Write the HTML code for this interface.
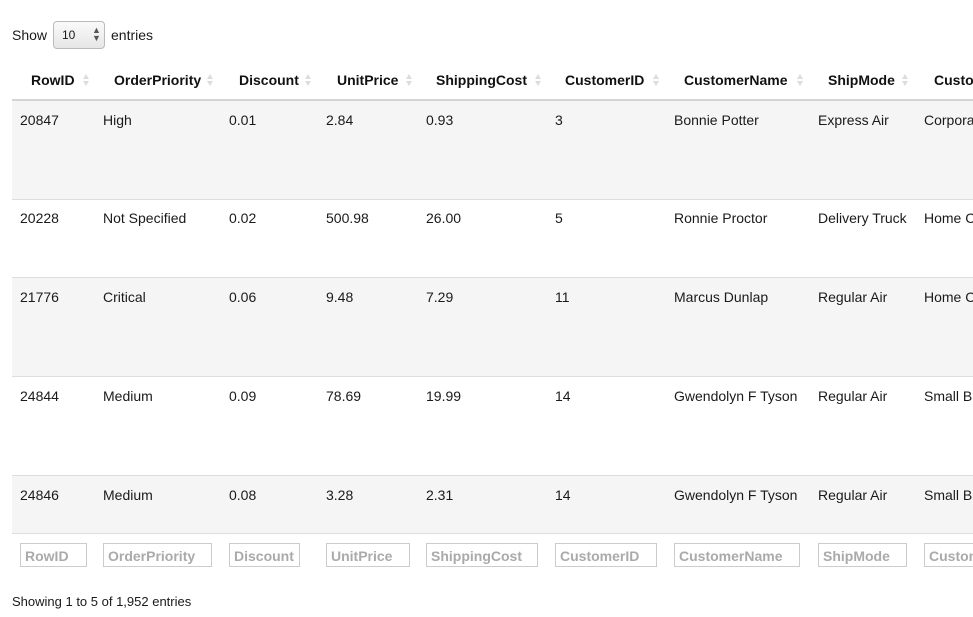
<!DOCTYPE html>
<html><head><style>
html,body{margin:0;width:973px;height:617px;overflow:hidden}
body{background:#fff;font-family:"Liberation Sans",Arial,sans-serif;font-size:14px;color:#1a1a1a}
#w{position:relative;width:973px;height:617px;overflow:hidden}
.a{position:absolute;white-space:nowrap;line-height:16px}
.h{font-weight:bold;color:#111}
.s{position:absolute;width:7px;height:14px}
.s:before,.s:after{content:"";position:absolute;left:0;border-left:3.5px solid transparent;border-right:3.5px solid transparent}
.s:before{top:1px;border-bottom:5px solid #ddd}
.s:after{top:8px;border-top:5px solid #ddd}
.bg{position:absolute;left:12px;width:961px;background:#f5f5f5}
.ln{position:absolute;left:12px;width:961px;height:1px;background:#ddd}
.in{position:absolute;top:543px;height:24px;border:1px solid #ccc;box-sizing:border-box;font-weight:bold;color:#aaa;padding:4px 0 0 4px;line-height:16px;font-size:14px;overflow:hidden;white-space:nowrap}
</style></head><body><div id="w">
<div class="a" style="left:12px;top:27px">Show</div>
<div style="position:absolute;left:53px;top:21px;width:52px;height:28px;border:1px solid #bbb;border-radius:4px;box-sizing:border-box;background:linear-gradient(#fafafa,#e6e6e6)"></div>
<div class="a" style="left:62px;top:27px;font-size:12px">10</div>
<div class="a" style="left:92px;top:26px;font-size:9px;line-height:8px;color:#555">▲</div>
<div class="a" style="left:92px;top:34px;font-size:9px;line-height:8px;color:#555">▼</div>
<div class="a" style="left:111px;top:27px">entries</div>

<div class="a h" style="left:31px;top:72px">RowID</div><div class="s" style="left:83px;top:73px"></div>
<div class="a h" style="left:114px;top:72px">OrderPriority</div><div class="s" style="left:207px;top:73px"></div>
<div class="a h" style="left:239px;top:72px">Discount</div><div class="s" style="left:305px;top:73px"></div>
<div class="a h" style="left:337px;top:72px">UnitPrice</div><div class="s" style="left:406px;top:73px"></div>
<div class="a h" style="left:436px;top:72px">ShippingCost</div><div class="s" style="left:535px;top:73px"></div>
<div class="a h" style="left:565px;top:72px">CustomerID</div><div class="s" style="left:653px;top:73px"></div>
<div class="a h" style="left:684px;top:72px">CustomerName</div><div class="s" style="left:797px;top:73px"></div>
<div class="a h" style="left:828px;top:72px">ShipMode</div><div class="s" style="left:902px;top:73px"></div>
<div class="a h" style="left:934px;top:72px">Custo</div>

<div class="bg" style="top:101px;height:98px"></div>
<div class="bg" style="top:278px;height:98px"></div>
<div class="bg" style="top:476px;height:57px"></div>
<div class="ln" style="top:99px;height:2px;background:#d4d4d4"></div>
<div class="ln" style="top:199px"></div>
<div class="ln" style="top:277px"></div>
<div class="ln" style="top:376px"></div>
<div class="ln" style="top:475px"></div>
<div class="ln" style="top:533px"></div>

<div class="a" style="left:20px;top:112px">20847</div><div class="a" style="left:103px;top:112px">High</div><div class="a" style="left:229px;top:112px">0.01</div><div class="a" style="left:326px;top:112px">2.84</div><div class="a" style="left:426px;top:112px">0.93</div><div class="a" style="left:555px;top:112px">3</div><div class="a" style="left:674px;top:112px">Bonnie Potter</div><div class="a" style="left:818px;top:112px">Express Air</div><div class="a" style="left:924px;top:112px">Corpora</div>
<div class="a" style="left:20px;top:210px">20228</div><div class="a" style="left:103px;top:210px">Not Specified</div><div class="a" style="left:229px;top:210px">0.02</div><div class="a" style="left:326px;top:210px">500.98</div><div class="a" style="left:426px;top:210px">26.00</div><div class="a" style="left:555px;top:210px">5</div><div class="a" style="left:674px;top:210px">Ronnie Proctor</div><div class="a" style="left:818px;top:210px">Delivery Truck</div><div class="a" style="left:924px;top:210px">Home C</div>
<div class="a" style="left:20px;top:289px">21776</div><div class="a" style="left:103px;top:289px">Critical</div><div class="a" style="left:229px;top:289px">0.06</div><div class="a" style="left:326px;top:289px">9.48</div><div class="a" style="left:426px;top:289px">7.29</div><div class="a" style="left:555px;top:289px">11</div><div class="a" style="left:674px;top:289px">Marcus Dunlap</div><div class="a" style="left:818px;top:289px">Regular Air</div><div class="a" style="left:924px;top:289px">Home C</div>
<div class="a" style="left:20px;top:388px">24844</div><div class="a" style="left:103px;top:388px">Medium</div><div class="a" style="left:229px;top:388px">0.09</div><div class="a" style="left:326px;top:388px">78.69</div><div class="a" style="left:426px;top:388px">19.99</div><div class="a" style="left:555px;top:388px">14</div><div class="a" style="left:674px;top:388px">Gwendolyn F Tyson</div><div class="a" style="left:818px;top:388px">Regular Air</div><div class="a" style="left:924px;top:388px">Small B</div>
<div class="a" style="left:20px;top:487px">24846</div><div class="a" style="left:103px;top:487px">Medium</div><div class="a" style="left:229px;top:487px">0.08</div><div class="a" style="left:326px;top:487px">3.28</div><div class="a" style="left:426px;top:487px">2.31</div><div class="a" style="left:555px;top:487px">14</div><div class="a" style="left:674px;top:487px">Gwendolyn F Tyson</div><div class="a" style="left:818px;top:487px">Regular Air</div><div class="a" style="left:924px;top:487px">Small B</div>

<div class="in" style="left:20px;width:67px">RowID</div>
<div class="in" style="left:103px;width:109px">OrderPriority</div>
<div class="in" style="left:229px;width:71px">Discount</div>
<div class="in" style="left:326px;width:84px">UnitPrice</div>
<div class="in" style="left:426px;width:112px">ShippingCost</div>
<div class="in" style="left:555px;width:102px">CustomerID</div>
<div class="in" style="left:674px;width:126px">CustomerName</div>
<div class="in" style="left:818px;width:89px">ShipMode</div>
<div class="in" style="left:924px;width:49px;border-right:none">Custon</div>

<div class="a" style="left:12px;top:594px;font-size:13px">Showing 1 to 5 of 1,952 entries</div>
</div></body></html>
